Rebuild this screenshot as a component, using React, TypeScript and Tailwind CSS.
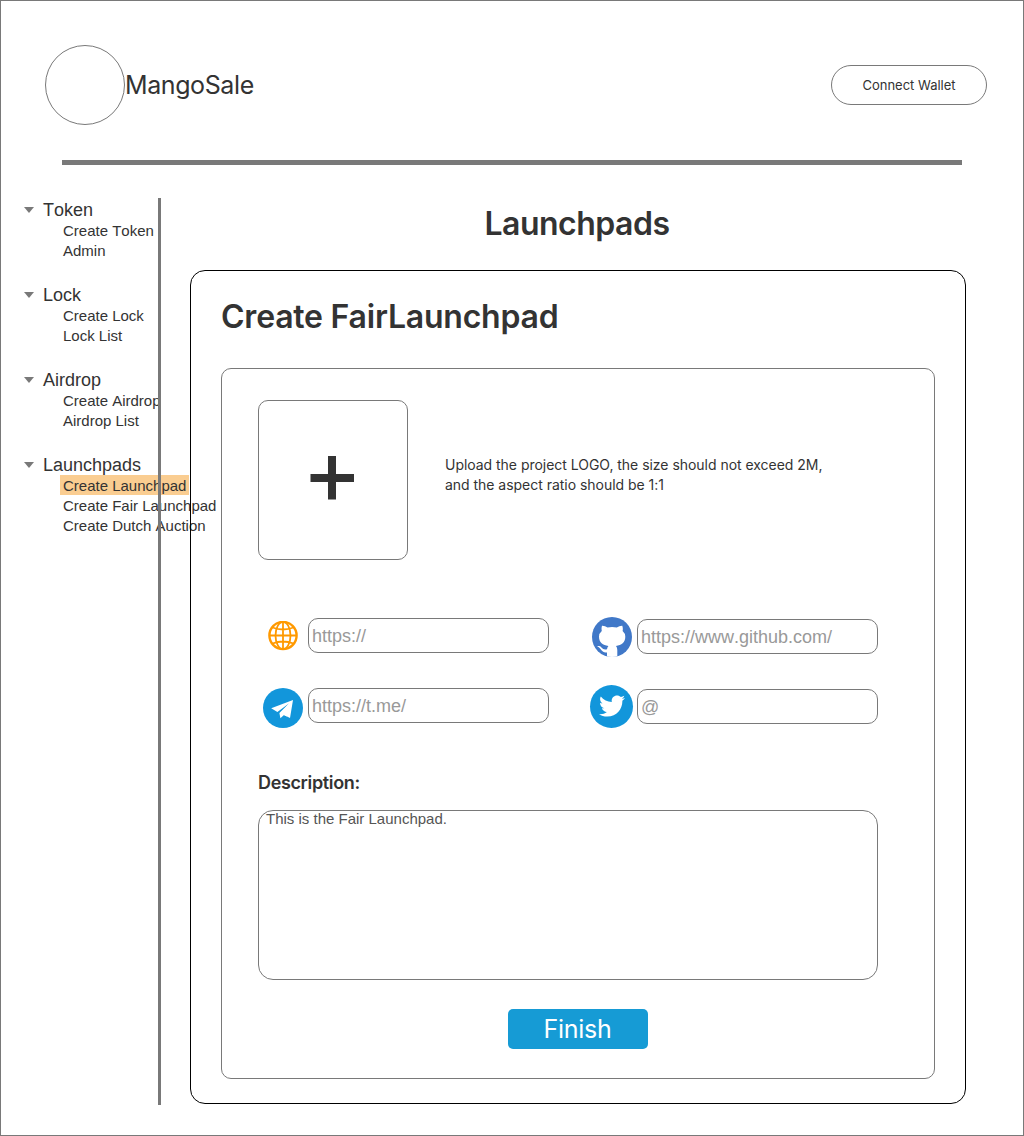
import { FaTwitter } from "react-icons/fa";
import type { ReactNode } from "react";

const menu = [
  { title: "Token", items: ["Create Token", "Admin"] },
  { title: "Lock", items: ["Create Lock", "Lock List"] },
  { title: "Airdrop", items: ["Create Airdrop", "Airdrop List"] },
  { title: "Launchpads", items: ["Create Launchpad", "Create Fair Launchpad", "Create Dutch Auction"] },
];

function Sidebar() {
  return (
    <nav className="w-[157px] pt-px pl-[23px] font-['Liberation_Sans',sans-serif] whitespace-nowrap [font-kerning:none]">
      {menu.map((group) => (
        <section key={group.title} className="mb-6">
          <div className="flex h-5 items-center">
            <svg className="mt-[2px] h-[6px] w-[10px]" viewBox="0 0 10 6">
              <path d="M0 0H10L5 6Z" fill="#797979" />
            </svg>
            <h2 className="ml-[9px] pt-0.5 text-[18px] leading-[20px]">{group.title}</h2>
          </div>
          <ul className="mt-px ml-9 text-[15px]">
            {group.items.map((item) => (
              <li
                key={item}
                className={
                  item === "Create Launchpad"
                    ? "h-5 w-[129px] bg-[#facd91] pl-[3px] leading-[21px]"
                    : "h-5 w-[129px] pl-[3px] leading-[21px]"
                }
              >
                {item}
              </li>
            ))}
          </ul>
        </section>
      ))}
    </nav>
  );
}

function GlobeIcon() {
  return (
    <svg className="h-[30px] w-[30px]" viewBox="0 0 30 30" fill="none" stroke="#ff9900" strokeWidth="1.8">
      <circle cx="15" cy="14.5" r="13.6" strokeWidth="2.4" />
      <ellipse cx="15" cy="14.5" rx="7.5" ry="13.6" />
      <path d="M15 1V28M1 14.5H29M4.5 6.5Q15 10.5 25.5 6.5M4.5 22.5Q15 18.5 25.5 22.5" />
    </svg>
  );
}

function TelegramIcon() {
  return (
    <svg className="mt-[5px] h-10 w-10 shrink-0" viewBox="0 0 40 40">
      <circle cx="20" cy="20" r="20" fill="#1296db" />
      <path fill="#fff" d="M8.2 20.3L30 12L27 29.9L21 27L17.4 30.3L16.4 25L26.2 15.3L14.4 23.9Z" />
      <path fill="#fff" d="M17.2 25.3L27.5 14L24 28.4Z" />
    </svg>
  );
}

function TwitterIcon() {
  return (
    <div className="-mt-px mr-px flex h-[43px] w-[43px] shrink-0 items-center justify-center rounded-full bg-[#1296db] text-white">
      <FaTwitter className="h-[26px] w-[26px]" />
    </div>
  );
}

function GithubIcon() {
  return (
    <svg className="h-10 w-10 shrink-0" viewBox="0 0 40 40">
      <defs>
        <clipPath id="disc">
          <circle cx="20" cy="20" r="20" />
        </clipPath>
      </defs>
      <g clipPath="url(#disc)">
        <rect width="40" height="40" fill="#4078c8" />
        <path
          fill="#fff"
          d="M10 8.7Q13 8.6 15.5 10.4Q20 9.5 24.8 10.4Q27.5 8.6 30.3 8.7Q31.2 11.5 30.6 14Q33.3 16.2 33.3 19.8C33.3 25.8 29.5 28.2 24 28.9Q25.3 30.3 25.3 33V41H15V35.4C9.5 36.2 9.8 31.8 5.5 29.6Q4.5 28.7 7 29C10.5 29.8 9.8 33.3 15 32.2Q15.2 30.2 16.4 28.9C10.8 28.2 7 25.8 7 19.8Q7 16.2 9.8 14Q9.2 11.5 10 8.7Z"
        />
      </g>
    </svg>
  );
}

function LinkField({ icon, value }: { icon: ReactNode; value: string }) {
  return (
    <div className="flex h-[35px] items-center">
      <div className="flex h-[35px] w-[50px] shrink-0 items-center justify-center">{icon}</div>
      <div className="flex h-[35px] w-[241px] items-center rounded-[10px] border border-[#797979] pt-0.5 pl-[3px] font-['Liberation_Sans',sans-serif] text-[18px] text-[#999] [font-kerning:none]">
        {value}
      </div>
    </div>
  );
}

export default function App() {
  return (
    <div className="h-[1136px] w-[1024px] overflow-hidden border border-[#797979] bg-white font-[Inter,sans-serif] text-[#333]">
      <header className="flex h-[124px] items-end justify-between pr-9 pl-11">
        <div className="flex items-center">
          <div className="h-20 w-20 rounded-full border border-[#797979]" />
          <span className="pt-0.5 text-[25px] tracking-[-0.4px]">MangoSale</span>
        </div>
        <button className="mb-5 h-10 w-[156px] rounded-full border border-[#797979] pt-0.5 text-[13px]">
          Connect Wallet
        </button>
      </header>
      <div className="mt-[35px] ml-[61px] h-[5px] w-[900px] bg-[#797979]" />

      <div className="mt-[33px] flex">
        <Sidebar />
        <div className="relative h-[907px] w-[3px] shrink-0 bg-[#797979]" />
        <main className="relative ml-[29px] w-[776px]">
          <h1 className="h-[72px] pt-1 pr-0.5 text-center text-[32px] leading-[44px] font-semibold tracking-[-0.5px]">
            Launchpads
          </h1>
          <section className="h-[834px] rounded-[15px] border border-black px-[30px]">
            <h2 className="pt-6 text-[32px] leading-[44px] font-semibold tracking-[-0.22px]">Create FairLaunchpad</h2>
            <div className="mt-[29px] h-[711px] w-[714px] rounded-[10px] border border-[#797979] pt-[31px] pl-9">
              <div className="flex">
                <div className="flex h-40 w-[150px] items-center justify-center rounded-[10px] border border-[#797979]">
                  <svg className="mt-[-4px] ml-[-2px] h-11 w-11" viewBox="0 0 44 44">
                    <path d="M18 0H26V18H44V26H26V43.5H18V26H0.5V18H18Z" fill="#333" />
                  </svg>
                </div>
                <p className="mt-[55px] ml-[37px] text-[14px] leading-5 tracking-[-0.03px]">
                  Upload the project LOGO, the size should not exceed 2M,
                  <br />
                  and the aspect ratio should be 1:1
                </p>
              </div>

              <div className="mt-[58px] flex gap-[38px]">
                <div className="flex flex-col gap-[35px]">
                  <LinkField value="https://" icon={<GlobeIcon />} />
                  <LinkField value="https://t.me/" icon={<TelegramIcon />} />
                </div>
                <div className="mt-px flex flex-col gap-[35px]">
                  <LinkField value="https://www.github.com/" icon={<GithubIcon />} />
                  <LinkField value="@" icon={<TwitterIcon />} />
                </div>
              </div>

              <h3 className="mt-[46px] text-[18px] leading-[25px] font-semibold tracking-[-0.35px]">Description:</h3>
              <div className="mt-[15px] h-[170px] w-[620px] rounded-[15px] border border-[#797979] pl-[7px] font-['Liberation_Sans',sans-serif] text-[15px] leading-[15px] text-[#555]">
                This is the Fair Launchpad.
              </div>
              <button className="mt-[29px] ml-[250px] h-10 w-[140px] rounded-[5px] bg-[#169bd5] pt-0.5 pr-px text-[25px] tracking-[-0.3px] text-white">
                Finish
              </button>
            </div>
          </section>
        </main>
      </div>
    </div>
  );
}
